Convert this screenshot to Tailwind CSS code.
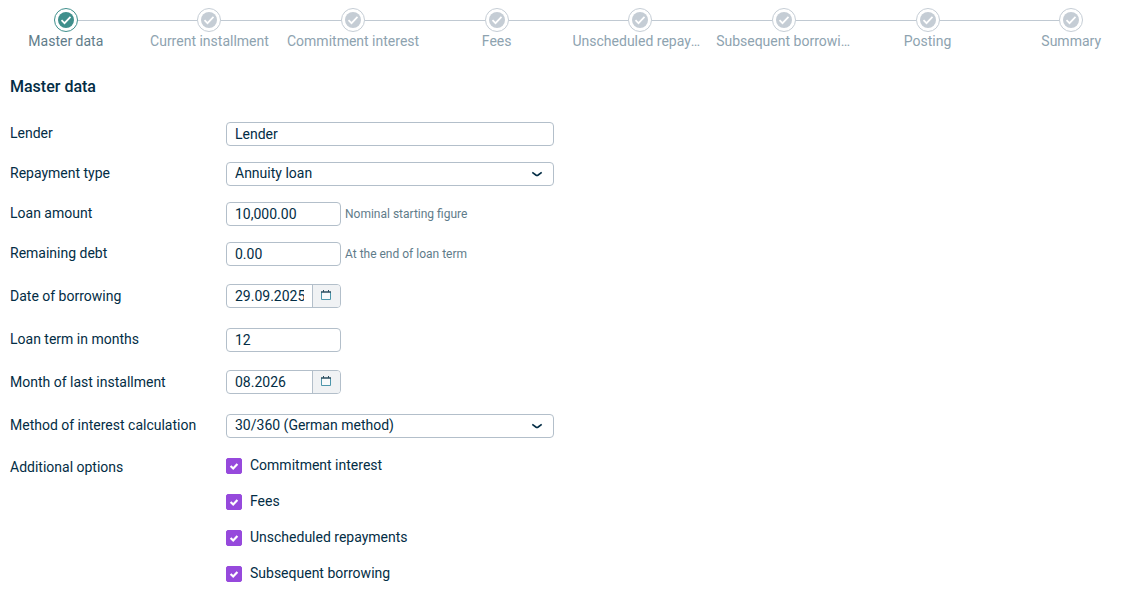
<!DOCTYPE html>
<html lang="en">
<head>
<meta charset="utf-8">
<meta name="viewport" content="width=device-width, initial-scale=1">
<title>Master data</title>
<script src="https://cdn.jsdelivr.net/npm/@tailwindcss/browser@4"></script>
</head>
<body class="bg-white font-[Roboto,sans-serif] text-sm text-[#032d45]">
<svg class="hidden">
  <symbol id="step" viewBox="0 0 24 24"><circle cx="12" cy="12" r="11.5" fill="#fff" stroke="currentColor"/><circle cx="12" cy="12" r="8" fill="currentColor"/><path d="M7.5 12.2l3 3 6-6.4" fill="none" stroke="#fff" stroke-width="1.7"/></symbol>
  <symbol id="chevron" viewBox="0 0 12 12"><path d="M1.3 4.4L4.8 7Q6 7.8 7.2 7L10.7 4.4" fill="none" stroke="#032d45" stroke-width="1.6"/></symbol>
  <symbol id="tick" viewBox="0 0 16 16"><path d="M4.6 8l2.6 2.5 4.2-4.5" fill="none" stroke="#fff" stroke-width="2.2"/></symbol>
  <symbol id="calendar" viewBox="0 0 12 12"><path d="M1.5 3v7.5h9V3" fill="#f7fafb" stroke="#4d96ab"/><path d="M1 3h10" stroke="#2b4e60" stroke-width="1.6" fill="none"/><path d="M3.5 1v2M8.5 1v2" fill="none" stroke="#2b4e60"/></symbol>
</svg>
<nav aria-label="Progress" class="overflow-x-clip px-0.5 pt-2">
  <ol class="grid grid-cols-8 gap-4 text-center leading-[18px] text-[#8ea3b0]">
    <li><div class="-mx-2 flex items-center text-[#c5cdd5]"><span class="h-px flex-1"></span><svg class="size-6 text-[#3f8f8c]"><use href="#step"/></svg><span class="h-px flex-1 bg-[#c0c9d2]"></span></div><div class="-mx-1 truncate text-[#5f7c8a]" aria-current="step">Master data</div></li>
    <li><div class="-mx-2 flex items-center text-[#c5cdd5]"><span class="h-px flex-1 bg-[#c0c9d2]"></span><svg class="size-6"><use href="#step"/></svg><span class="h-px flex-1 bg-[#c0c9d2]"></span></div><div class="-mx-1 truncate">Current installment</div></li>
    <li><div class="-mx-2 flex items-center text-[#c5cdd5]"><span class="h-px flex-1 bg-[#c0c9d2]"></span><svg class="size-6"><use href="#step"/></svg><span class="h-px flex-1 bg-[#c0c9d2]"></span></div><div class="-mx-1 truncate">Commitment interest</div></li>
    <li><div class="-mx-2 flex items-center text-[#c5cdd5]"><span class="h-px flex-1 bg-[#c0c9d2]"></span><svg class="size-6"><use href="#step"/></svg><span class="h-px flex-1 bg-[#c0c9d2]"></span></div><div class="-mx-1 truncate">Fees</div></li>
    <li><div class="-mx-2 flex items-center text-[#c5cdd5]"><span class="h-px flex-1 bg-[#c0c9d2]"></span><svg class="size-6"><use href="#step"/></svg><span class="h-px flex-1 bg-[#c0c9d2]"></span></div><div class="-mx-1 truncate">Unscheduled repayments</div></li>
    <li><div class="-mx-2 flex items-center text-[#c5cdd5]"><span class="h-px flex-1 bg-[#c0c9d2]"></span><svg class="size-6"><use href="#step"/></svg><span class="h-px flex-1 bg-[#c0c9d2]"></span></div><div class="-mx-1 truncate">Subsequent borrowing</div></li>
    <li><div class="-mx-2 flex items-center text-[#c5cdd5]"><span class="h-px flex-1 bg-[#c0c9d2]"></span><svg class="size-6"><use href="#step"/></svg><span class="h-px flex-1 bg-[#c0c9d2]"></span></div><div class="-mx-1 truncate">Posting</div></li>
    <li><div class="-mx-2 flex items-center text-[#c5cdd5]"><span class="h-px flex-1 bg-[#c0c9d2]"></span><svg class="size-6"><use href="#step"/></svg><span class="h-px flex-1"></span></div><div class="-mx-1 truncate">Summary</div></li>
  </ol>
</nav>
<main class="px-2.5 pt-6">
  <h1 class="pt-px pb-[15px] text-base leading-6 font-medium">Master data</h1>
  <form>
    <div class="flex h-10 items-center">
      <label for="lender" class="w-54 pb-0.5">Lender</label>
      <input id="lender" value="Lender" class="h-6 w-82 rounded border border-[#b3bfca] px-2">
    </div>
    <div class="flex h-10 items-center">
      <label for="type" class="w-54 pb-0.5">Repayment type</label>
      <div class="relative w-82">
        <select id="type" class="block h-6 w-full appearance-none rounded border border-[#b3bfca] bg-white px-2 pb-0.5"><option>Annuity loan</option></select>
        <svg class="pointer-events-none absolute top-1.5 right-[11px] size-3"><use href="#chevron"/></svg>
      </div>
    </div>
    <div class="flex h-10 items-center">
      <label for="amount" class="w-54 pb-0.5">Loan amount</label>
      <input id="amount" value="10,000.00" aria-describedby="amount-hint" class="h-6 w-[115px] rounded border border-[#b3bfca] px-2">
      <span id="amount-hint" class="pl-1 text-xs text-[#5f7c8a]">Nominal starting figure</span>
    </div>
    <div class="flex h-10 items-center">
      <label for="debt" class="w-54 pb-0.5">Remaining debt</label>
      <input id="debt" value="0.00" aria-describedby="debt-hint" class="h-6 w-[115px] rounded border border-[#b3bfca] px-2">
      <span id="debt-hint" class="pl-1 text-xs text-[#5f7c8a]">At the end of loan term</span>
    </div>
    <div class="flex h-11 items-center">
      <label for="borrowed" class="w-54">Date of borrowing</label>
      <div class="flex h-6 w-[115px] overflow-hidden rounded border border-[#b3bfca]">
        <input id="borrowed" value="29.09.2025" class="min-w-0 flex-1 px-2">
        <button type="button" aria-label="Choose date of borrowing" class="flex w-7 items-center justify-center border-l border-[#b3bfca] bg-[#f0f2f4] pr-0.5 pb-0.5"><svg class="size-3"><use href="#calendar"/></svg></button>
      </div>
    </div>
    <div class="flex h-11 items-center">
      <label for="term" class="w-54 pb-0.5">Loan term in months</label>
      <input id="term" value="12" class="h-6 w-[115px] rounded border border-[#b3bfca] px-2">
    </div>
    <div class="flex h-10 items-center">
      <label for="last" class="w-54">Month of last installment</label>
      <div class="flex h-6 w-[115px] overflow-hidden rounded border border-[#b3bfca]">
        <input id="last" value="08.2026" class="min-w-0 flex-1 px-2">
        <button type="button" aria-label="Choose month of last installment" class="flex w-7 items-center justify-center border-l border-[#b3bfca] bg-[#f0f2f4] pr-0.5 pb-0.5"><svg class="size-3"><use href="#calendar"/></svg></button>
      </div>
    </div>
    <div class="flex h-12 items-center">
      <label for="method" class="w-54 pb-0.5">Method of interest calculation</label>
      <div class="relative w-82">
        <select id="method" class="block h-6 w-full appearance-none rounded border border-[#b3bfca] bg-white px-2 pb-0.5"><option>30/360 (German method)</option></select>
        <svg class="pointer-events-none absolute top-1.5 right-[11px] size-3"><use href="#chevron"/></svg>
      </div>
    </div>
    <div role="group" aria-labelledby="options" class="flex">
      <span id="options" class="w-54 pt-[7px]">Additional options</span>
      <div class="flex flex-col gap-1">
        <label class="flex h-8 items-center gap-2"><span class="relative size-4"><input type="checkbox" checked class="peer block size-4 appearance-none rounded-xs border border-[#b3bfca] checked:border-[#9649dc] checked:bg-[#9649dc]"><svg class="pointer-events-none absolute inset-0 hidden size-4 peer-checked:block"><use href="#tick"/></svg></span><span class="pb-0.5">Commitment interest</span></label>
        <label class="flex h-8 items-center gap-2"><span class="relative size-4"><input type="checkbox" checked class="peer block size-4 appearance-none rounded-xs border border-[#b3bfca] checked:border-[#9649dc] checked:bg-[#9649dc]"><svg class="pointer-events-none absolute inset-0 hidden size-4 peer-checked:block"><use href="#tick"/></svg></span><span class="pb-0.5">Fees</span></label>
        <label class="flex h-8 items-center gap-2"><span class="relative size-4"><input type="checkbox" checked class="peer block size-4 appearance-none rounded-xs border border-[#b3bfca] checked:border-[#9649dc] checked:bg-[#9649dc]"><svg class="pointer-events-none absolute inset-0 hidden size-4 peer-checked:block"><use href="#tick"/></svg></span><span class="pb-0.5">Unscheduled repayments</span></label>
        <label class="flex h-8 items-center gap-2"><span class="relative size-4"><input type="checkbox" checked class="peer block size-4 appearance-none rounded-xs border border-[#b3bfca] checked:border-[#9649dc] checked:bg-[#9649dc]"><svg class="pointer-events-none absolute inset-0 hidden size-4 peer-checked:block"><use href="#tick"/></svg></span><span class="pb-0.5">Subsequent borrowing</span></label>
      </div>
    </div>
  </form>
</main>
</body>
</html>
